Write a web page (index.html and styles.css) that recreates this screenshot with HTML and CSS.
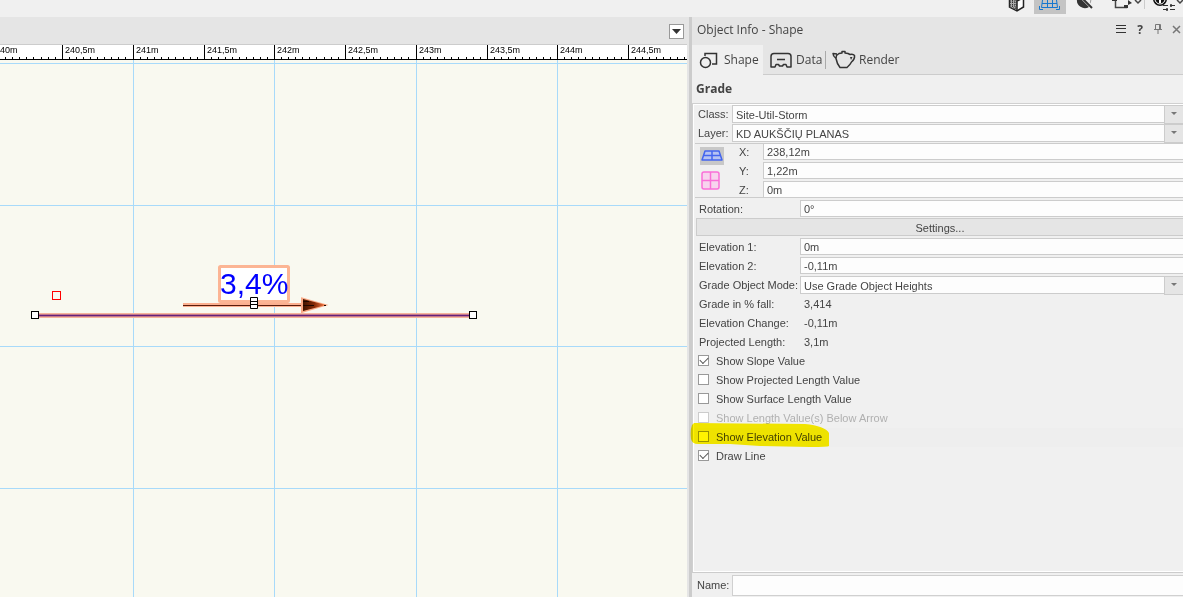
FILE: index.html
```html
<!DOCTYPE html>
<html lang="en">
<head>
<meta charset="utf-8">
<title>Object Info - Shape</title>
<link rel="stylesheet" href="styles.css">
</head>
<body>
<header class="toolbar">
  <button class="tool" aria-label="Cube view"><svg width="34" height="14"><path d="M9.500-2V7l7.500 4 6.500-4V-2" fill="#fff" stroke="#222" stroke-width="1.500"/><path d="M10 0v7l7 3V0z" fill="#aaa"/><path d="M10 0v8M12.500 0v9M15 0v10M10 2h7M10 5h7M11 8h6" stroke="#333" stroke-dasharray="1 1"/><path d="M17 0v11M17 1l6-3" stroke="#222" stroke-width="1.500"/></svg></button>
  <button class="tool tool-on" aria-label="Grid"><svg width="32" height="14"><path d="M8.500 0L7.500 7.500H23.500L22.500 0M8 3.500H23M13.500 0V7M18.500 0V7M5.500 6V9.500H9M25.500 6V9.500H22" fill="none" stroke="#1677cf"/></svg></button>
  <button class="tool" aria-label="Contrast"><svg width="40" height="14"><path d="M11-1A8 8 0 0 0 23 7L15-1z" fill="#333"/><path d="M17-1L23 5Q25 2 25-1" fill="none" stroke="#999"/><path d="M18-1L27 8" stroke="#f0f0f0" stroke-width="3"/><path d="M17-1L26 8" stroke="#333" stroke-width="2"/></svg></button>
  <button class="tool tool-split" aria-label="Reshape"><svg width="38" height="14"><path d="M9.500-2V7.500H20.500V5" fill="none" stroke="#444" stroke-width="1.500"/><path d="M6-1h5v2H6zM18 5h4v3h-4zM22 0l4 3-4 2z" fill="#333"/><path d="M29 0l3 3 3-3" fill="none" stroke="#444" stroke-width="1.500"/></svg></button>
  <button class="tool" aria-label="View settings"><svg width="38" height="14"><circle cx="15" cy="-1" r="7" fill="#111"/><circle cx="15" cy="-1" r="5" fill="none" stroke="#fff"/><path d="M15-1v4" stroke="#fff" stroke-width="2"/><path d="M18 5.500h12M18 9.500h12" stroke="#333" stroke-dasharray="5 2"/><path d="M26 4v3M22 8v3" stroke="#333" stroke-width="1.500"/><path d="M32 0l3 3 3-3" fill="none" stroke="#444" stroke-width="1.500"/></svg></button>
</header>
<div class="workspace">
  <main class="viewport">
    <div class="view-bar"><button class="view-menu" aria-label="View menu"><svg width="11" height="6"><path d="M1 0h9L5.500 5z" fill="#333"/></svg></button></div>
    <svg class="ruler">
      <defs>
        <path id="metre" d="M0.500 13v2M7.500 13v2M14.500 13v2M21.500 13v2M28.500 13v2M35.500 13v2M42.500 13v2M50.500 13v2M57.500 13v2M64.500 13v2M71.500 13v2M78.500 13v2M85.500 13v2M92.500 13v2M99.500 13v2M106.500 13v2M113.500 13v2M120.500 13v2M127.500 13v2M134.500 13v2M0.500 1v14M71.500 1v14" stroke="#000"/>
      </defs>
      <use href="#metre" x="-9"/><use href="#metre" x="133"/><use href="#metre" x="274"/><use href="#metre" x="416"/><use href="#metre" x="557"/>
      <path d="M0 0.500H2000" stroke="#ccc"/>
      <path d="M0 15.500H2000" stroke="#000"/>
      <g class="ruler-text">
        <text x="0" y="9">40m</text><text x="65" y="9">240,5m</text><text x="136" y="9">241m</text><text x="207" y="9">241,5m</text><text x="277" y="9">242m</text><text x="348" y="9">242,5m</text><text x="419" y="9">243m</text><text x="490" y="9">243,5m</text><text x="560" y="9">244m</text><text x="631" y="9">244,5m</text>
      </g>
    </svg>
    <svg class="drawing">
      <defs><linearGradient id="head"><stop offset="0" stop-color="#401400"/><stop offset=".5" stop-color="#882c08"/><stop offset="1" stop-color="#ff8048"/></linearGradient></defs>
      <path d="M0 3.500H2000M0 145.500H2000M0 286.500H2000M0 428.500H2000M133.500 0V2000M274.500 0V2000M416.500 0V2000M557.500 0V2000" stroke="#a8dafa"/>
      <rect x="219.500" y="206.500" width="69" height="35" rx="1" fill="#fff" stroke="#fcb594" stroke-width="3"/>
      <text class="slope" x="220" y="234">3,4%</text>
      <path d="M183 245H304" stroke="#fcb090" stroke-width="4"/>
      <path d="M183 245.500H304" stroke="#5a1c0c"/>
      <path d="M302 238.500L325 245L302 252z" fill="#882c08" stroke="#f9aa87" stroke-width="2"/>
      <path d="M303 239l23 6-23 6z" fill="url(#head)"/>
      <path d="M303 241.500h6M303 245.500h11M324 245.500h2" stroke="#200800"/>
      <path d="M32 255.500H474" stroke="#f7b49c" stroke-width="5"/>
      <path d="M32 255.500H474" stroke="#c0788c" stroke-width="3"/>
      <path d="M32 255.500H474" stroke="#65207e"/>
      <g fill="#fff" stroke="#000"><rect x="31.500" y="251.500" width="7" height="7"/><rect x="469.500" y="251.500" width="7" height="7"/><path d="M250.500 237.500h7v11h-7zM250.500 241.500h7M250.500 244.500h7"/></g>
      <rect x="52.500" y="231.500" width="8" height="8" fill="none" stroke="#f00"/>
    </svg>
  </main>
  <div class="splitter"></div>
  <aside class="panel">
    <div class="titlebar">
      <h1 class="title">Object Info - Shape</h1>
      <button class="icon-btn" aria-label="Menu"><svg width="12" height="12"><path d="M1 2.500h10M1 5.500h10M1 9.500h10" stroke="#333"/></svg></button>
      <button class="icon-btn help" aria-label="Help">?</button>
      <button class="icon-btn" aria-label="Pin"><svg width="10" height="12"><path d="M2.500 1.500h5v5h-5zM1 6.500h8M5 7v4M6.500 2v4" fill="none" stroke="#777"/></svg></button>
      <button class="icon-btn" aria-label="Close"><svg width="10" height="12"><path d="M2 3l7 7M9 3L2 10" stroke="#777" stroke-width="1.500"/></svg></button>
    </div>
    <nav class="tabs">
      <button class="tab tab-shape"><svg width="20" height="20"><circle cx="6.500" cy="12.500" r="5" fill="none" stroke="#333" stroke-width="1.500"/><path d="M6 6V3.500H17.500V14H13" fill="none" stroke="#333" stroke-width="1.500"/></svg>Shape</button>
      <button class="tab tab-data"><svg width="22" height="20"><path d="M4 3.500H18Q21 3.500 21 6.500V17H17L16 14.500H13.500L12.500 16H9.500L8.500 14.500H6L5 17H1V6.500Q1 3.500 4 3.500zM7 9.500h8" fill="none" stroke="#333" stroke-width="1.500" stroke-linejoin="round"/></svg>Data</button>
      <button class="tab tab-render"><svg width="24" height="20"><path d="M5 4L1 3.500Q1 6 4 8.500Q5 14 8 17.500H15Q18 15 19.500 12Q23 9 22.500 5.500Q21 3.500 18 4.500L16 3.500L13 3V1.500H10V3L7 3.500L4.500 5.500L4 8.500" fill="none" stroke="#333" stroke-width="1.500" stroke-linejoin="round"/><path d="M18 7h2.500L19 10z" fill="#333"/></svg>Render</button>
    </nav>
    <h2 class="object-type">Grade</h2>
    <form class="props">
      <div class="row"><label class="label-s" for="class">Class:</label><span class="select"><select id="class"><option>Site-Util-Storm</option></select></span></div>
      <div class="row"><label class="label-s" for="layer">Layer:</label><span class="select"><select id="layer"><option>KD AUKŠČIŲ PLANAS</option></select></span></div>
      <div class="position">
        <div class="modes">
          <button type="button" class="mode mode-on" aria-label="Layer plane"><svg width="24" height="18"><path d="M5 4h14l3 9H2zM3 8.500h18M12 4v9" fill="#b7c3f2" stroke="#4466ee" stroke-width="1.500" stroke-linejoin="round"/></svg></button>
          <button type="button" class="mode" aria-label="Screen plane"><svg width="21" height="20"><path d="M4 1h13q2 0 2 2v13q0 2-2 2H4q-2 0-2-2V3q0-2 2-2zM10.500 1v17M2 9.500h17" fill="#f7d4ee" stroke="#fa6fd8" stroke-width="1.500"/></svg></button>
        </div>
        <div class="coords">
          <div class="row"><label class="label-xs" for="x">X:</label><input class="field" id="x" value="238,12m"></div>
          <div class="row"><label class="label-xs" for="y">Y:</label><input class="field" id="y" value="1,22m"></div>
          <div class="row"><label class="label-xs" for="z">Z:</label><input class="field" id="z" value="0m"></div>
        </div>
      </div>
      <div class="row"><label class="label-l" for="rot">Rotation:</label><input class="field" id="rot" value="0°"></div>
      <div class="row"><button type="button" class="settings">Settings...</button></div>
      <div class="row"><label class="label-l" for="e1">Elevation 1:</label><input class="field" id="e1" value="0m"></div>
      <div class="row"><label class="label-l" for="e2">Elevation 2:</label><input class="field" id="e2" value="-0,11m"></div>
      <div class="row"><label class="label-l" for="mode">Grade Object Mode:</label><span class="select"><select id="mode"><option>Use Grade Object Heights</option></select></span></div>
      <div class="row"><span class="label-l">Grade in % fall:</span><output class="value">3,414</output></div>
      <div class="row"><span class="label-l">Elevation Change:</span><output class="value">-0,11m</output></div>
      <div class="row"><span class="label-l">Projected Length:</span><output class="value">3,1m</output></div>
      <label class="row check"><input type="checkbox" checked>Show Slope Value</label>
      <label class="row check"><input type="checkbox">Show Projected Length Value</label>
      <label class="row check"><input type="checkbox">Show Surface Length Value</label>
      <label class="row check disabled"><input type="checkbox" disabled>Show Length Value(s) Below Arrow</label>
      <label class="row check current"><input type="checkbox">Show Elevation Value<svg class="marker" width="140" height="26"><path d="M4 1L115 2Q135 4 139 11V24Q138 25 120 25L70 24 40 22H8Q2 22 1 17Q0 8 2 3z" fill="#fff300"/></svg></label>
      <label class="row check"><input type="checkbox" checked>Draw Line</label>
    </form>
    <div class="name-row"><label for="name">Name:</label><input class="field name" id="name"></div>
  </aside>
</div>
</body>
</html>
```
FILE: styles.css
```css
* { box-sizing: border-box; }
body {
  margin: 0;
  height: 100vh;
  display: flex;
  flex-direction: column;
  overflow: hidden;
  background: #f0f0f0;
  color: #444;
  font: 11px "Liberation Sans", Arial, sans-serif;
}
button, input, select { font: inherit; color: inherit; border-radius: 0; }
button { border: 0; padding: 0; background: none; }
svg { display: block; }

.toolbar { display: flex; justify-content: flex-end; height: 17px; flex: none; }
.tool { height: 14px; }
.tool-on { background: #c4c4c4; }
.tool-split { border-right: 1px solid #ccc; height: 9px; }
.tool-split svg { height: 9px; }

.workspace { flex: 1; display: flex; min-height: 0; }
.viewport { flex: 1; min-width: 0; display: flex; flex-direction: column; background: #f9f9f0; }
.view-bar {
  height: 27px;
  flex: none;
  display: flex;
  justify-content: flex-end;
  align-items: flex-end;
  padding: 0 3px 5px 0;
  background: #e5e5e5;
}
.view-menu {
  width: 15px;
  height: 15px;
  display: grid;
  place-items: center;
  background: #fff;
  border: 1px solid #999;
}
.ruler { width: 100%; height: 16px; flex: none; background: #fff; }
.ruler-text { font-size: 9px; fill: #000; }
.drawing { width: 100%; flex: 1; min-height: 0; }
.slope { font-size: 30px; fill: #00f; }

.splitter { width: 5px; flex: none; background: #ccc; border-left: 2px solid #e5e5e5; }

.panel { width: 491px; flex: none; display: flex; flex-direction: column; background: #f0f0f0; }
.titlebar {
  display: flex;
  align-items: center;
  gap: 8px;
  height: 28px;
  padding: 0 2px 4px 5px;
  background: #e5e5e5;
}
.title { margin: 0; flex: 1; font: 12px "Open Sans", sans-serif; }
.icon-btn { display: grid; place-items: center; min-width: 10px; }
.help { font: bold 12px "Open Sans", sans-serif; }

.tabs { display: flex; height: 30px; background: #e5e5e5; font: 12px "Open Sans", sans-serif; }
.tab { display: flex; align-items: center; gap: 5px; border-bottom: 1px solid #ccc; }
.tab-shape { width: 71px; padding-left: 7px; background: #f0f0f0; border-color: #f0f0f0; }
.tab-data { width: 63px; padding-left: 7px; gap: 4px; background: linear-gradient(#aaa, #aaa) right center / 1px 18px no-repeat; }
.tab-render { flex: 1; padding-left: 6px; gap: 3px; }

.object-type { margin: 0; height: 28px; padding-left: 4px; font: bold 12px/28px "Open Sans", sans-serif; }

.props {
  flex: 1;
  min-height: 0;
  padding: 1px 0 0 2px;
  border-top: 1px solid #d0d0d0;
  border-left: 1px solid #d0d0d0;
  border-bottom: 1px solid #ccc;
  box-shadow: inset 1px 1px #fff, inset 0 -1px #fff;
}
.row { display: flex; height: 19px; line-height: 18px; }
.label-s { width: 37px; padding-left: 3px; }
.label-xs { width: 25px; padding-left: 1px; }
.label-l { width: 105px; padding-left: 4px; white-space: nowrap; }
.value { padding-left: 4px; }
.field {
  flex: 1;
  min-width: 0;
  height: 17px;
  padding: 0 3px;
  background: #fdfdfd;
  border: 1px solid #ccc;
  border-right: 0;
}
.select { flex: 1; position: relative; height: 18px; }
.select select {
  display: block;
  width: 100%;
  height: 18px;
  padding: 0 20px 0 3px;
  appearance: none;
  background: #fdfdfd;
  border: 1px solid #ccc;
  border-right: 0;
}
.select::before {
  content: "";
  position: absolute;
  right: 0;
  top: 0;
  width: 18px;
  height: 17px;
  background: #e5e5e5;
  border: 1px solid #ccc;
  border-right: 0;
  pointer-events: none;
}
.select::after {
  content: "";
  position: absolute;
  right: 6px;
  top: 7px;
  border: solid transparent;
  border-width: 3px 3px 0;
  border-top-color: #777;
  pointer-events: none;
}
.position { display: flex; height: 57px; background: linear-gradient(#ccc, #ccc) 0 53px / 100% 1px no-repeat; border-top: 1px solid #ccc; }
.modes { width: 43px; padding: 3px 0 0 5px; display: flex; flex-direction: column; align-items: flex-start; gap: 6px; }
.mode-on { background: #c8c8c8; }
.coords { flex: 1; margin-top: -1px; }
.settings { flex: 1; height: 18px; margin: -1px 0 0 1px; background: #e5e5e5; border: 1px solid #ccc; border-right: 0; }

.check { align-items: center; gap: 7px; padding: 0 0 2px 3px; position: relative; }
.check input { appearance: none; margin: 0; width: 11px; height: 11px; background: #fff; border: 1px solid #999; }
.check input:checked::before {
  content: "";
  display: block;
  width: 7px;
  height: 4px;
  margin: 1px;
  border: solid #555;
  border-width: 0 0 1px 1px;
  transform: rotate(-45deg);
}
.disabled { color: #b0b0b0; }
.check input:disabled { border-color: #ccc; }
.current { background: #eee; }
.marker { position: absolute; left: -5px; top: -6px; mix-blend-mode: multiply; pointer-events: none; }

.name-row { display: flex; align-items: center; height: 24px; flex: none; padding-left: 5px; gap: 3px; }
.name { height: 21px; border-color: #d0d0d0; }
```
